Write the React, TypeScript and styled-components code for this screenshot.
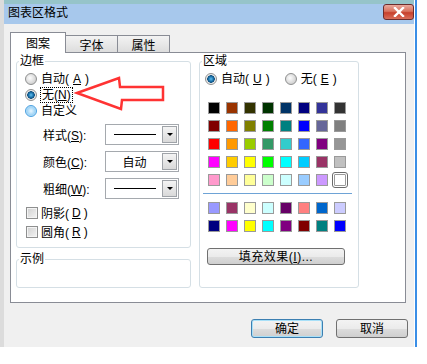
import React from 'react'
import styled, { createGlobalStyle, css } from 'styled-components'

const GlobalStyle = createGlobalStyle`
  body {
    margin: 0;
    background: #fff;
    font-family: "Liberation Sans", "Noto Sans CJK SC", sans-serif;
    font-size: 12px;
    color: #000;
  }
`

const Frame = styled.div`
  position: relative;
  display: flex;
  width: 417px;
  height: 347px;
`

const Side = styled.div`
  width: 4px;
  background: #dcdcdc;
  height: 350px;
`

const Edge = styled.div`
  width: 2px;
  margin-left: 1px;
  background: #3a8ee6;
  height: 350px;
`

const Window = styled.div`
  flex: 1;
  display: flex;
  flex-direction: column;
`

const TitleBar = styled.div`
  height: 24px;
  box-sizing: border-box;
  border-top: 4px solid #96c4c9;
  background: #a7c8ec;
  display: flex;
  align-items: flex-start;
  justify-content: space-between;
  padding-left: 4px;
`

const Title = styled.span`
  line-height: 19px;
  font-size: 12px;
`

const CloseBtn = styled.div`
  width: 31px;
  height: 16px;
  box-sizing: border-box;
  border: 1px solid #6b2d2d;
  border-radius: 3px;
  background: linear-gradient(#e9a99d, #d8735e 45%, #c7402c 55%, #d96e5a);
  display: flex;
  align-items: center;
  justify-content: center;
  margin-right: 0;
`

const Body = styled.div`
  flex: 1;
  background: #f0f0f0;
  padding: 8px 6px 0 6px;
`

const TabRow = styled.div`
  display: flex;
  align-items: flex-end;
  height: 21px;
  margin-bottom: -1px;
  position: relative;
  z-index: 1;
`

const Tab = styled.div<{ $active?: boolean }>`
  box-sizing: border-box;
  border: 1px solid #898c95;
  display: flex;
  align-items: center;
  justify-content: center;
  ${p =>
    p.$active
      ? css`
          width: 56px;
          height: 21px;
          background: #fff;
          border-bottom: none;
          padding-bottom: 1px;
        `
      : css`
          width: 53px;
          height: 18px;
          margin-left: -1px;
          background: linear-gradient(#f3f3f3, #dddddd);
          border-bottom-color: #898c95;
          padding-top: 1px;
          &:nth-child(2) { margin-left: 0; border-left: none; width: 52px; }
        `}
`

const Panel = styled.div`
  width: 396px;
  height: 251px;
  box-sizing: border-box;
  border: 1px solid #898c95;
  background: #fff;
  display: flex;
  gap: 8px;
  padding: 2px 0 0 5px;
`

const Column = styled.div`
  display: flex;
  flex-direction: column;
  gap: 5px;
`

const Group = styled.fieldset<{ $w: number; $h: number }>`
  margin: 0;
  min-width: 0;
  box-sizing: border-box;
  width: ${p => p.$w}px;
  height: ${p => p.$h}px;
  border: 1px solid #d5dfe5;
  border-radius: 3px;
  padding: 0 0 0 3px;
`

const Legend = styled.legend`
  padding: 0 1px;
  margin-left: -1px;
  font-size: 12px;
  line-height: 12px;
`

const RadioList = styled.div`
  display: flex;
  flex-direction: column;
  padding: 4px 0 0 5px;
`

const RadioRow = styled.label`
  display: flex;
  align-items: center;
  gap: 4px;
  height: 16px;
  line-height: 14px;
  white-space: nowrap;
`

const RadioLine = styled.div`
  display: flex;
  align-items: center;
  gap: 15px;
  padding: 4px 0 0 2px;
`

const RadioDot = styled.span<{ $state: 'off' | 'on' | 'hover' }>`
  width: 12px;
  height: 12px;
  box-sizing: border-box;
  border-radius: 50%;
  flex: none;
  border: 1px solid ${p => (p.$state === 'hover' ? '#4aa0e0' : '#8e8f8f')};
  background: ${p =>
    p.$state === 'on'
      ? 'radial-gradient(circle, #5fc0f0 0, #1a6fa8 2.5px, #0d4e7c 3.5px, #e6e6e6 4px, #fafafa 6px)'
      : p.$state === 'hover'
      ? 'radial-gradient(circle, #e8f6ff 0, #9fd4f6 4px, #d6eefc 6px)'
      : 'radial-gradient(circle at 40% 40%, #fdfdfd 0, #d2d2d2 6px)'};
`

const Focus = styled.span`
  outline: 1px dotted #000;
  outline-offset: 0;
  padding: 0 1px;
`

const FieldGrid = styled.div`
  display: grid;
  grid-template-columns: 62px 74px;
  row-gap: 6px;
  align-items: center;
  padding: 5px 0 0 23px;
  white-space: nowrap;
`

const Combo = styled.div`
  width: 74px;
  height: 21px;
  box-sizing: border-box;
  border: 1px solid #a5a9ae;
  background: #fff;
  display: flex;
  align-items: stretch;
  padding: 1px;
`

const ComboValue = styled.div`
  flex: 1;
  display: flex;
  align-items: center;
  justify-content: center;
`

const LineSample = styled.span`
  width: 42px;
  height: 1px;
  background: #000;
`

const DropBtn = styled.div`
  width: 15px;
  box-sizing: border-box;
  border: 1px solid #9fa3a8;
  background: linear-gradient(#f4f4f4, #d9d9d9);
  display: flex;
  align-items: center;
  justify-content: center;
  &::after {
    content: '';
    border-left: 3px solid transparent;
    border-right: 3px solid transparent;
    border-top: 3px solid #000;
  }
`

const CheckList = styled.div`
  display: flex;
  flex-direction: column;
  padding: 4px 0 0 6px;
`

const CheckRow = styled.label`
  display: flex;
  align-items: center;
  gap: 3px;
  height: 19px;
`

const CheckBox = styled.span`
  width: 12px;
  height: 12px;
  box-sizing: border-box;
  border: 1px solid #8e8f8f;
  background: linear-gradient(135deg, #d0d0d0, #f4f4f4);
  box-shadow: inset 0 0 0 1px #f4f4f4;
`

const Palette = styled.div<{ $top: number }>`
  display: grid;
  grid-template-columns: repeat(8, 12px);
  column-gap: 6px;
  row-gap: 6px;
  padding: ${p => p.$top}px 0 0 5px;
`

const Swatch = styled.span<{ $c: string; $selected?: boolean }>`
  width: 12px;
  height: 12px;
  box-sizing: border-box;
  background: ${p => p.$c};
  border: 1px solid #9a9a9a;
  ${p =>
    p.$selected &&
    css`
      outline: 1px solid #6a6a6a;
      outline-offset: 1px;
      border-radius: 1px;
      box-shadow: 0 0 0 1px #fff;
    `}
`

const Divider = styled.div`
  height: 1px;
  background: #6ea3d6;
  margin: 7px 6px 8px 0;
`

const ButtonBase = styled.button`
  font-family: inherit;
  font-size: 12px;
  color: #000;
  box-sizing: border-box;
  border: 1px solid #707070;
  border-radius: 3px;
  background: linear-gradient(#f3f3f3 0, #ebebeb 50%, #dddddd 51%, #cfcfcf 100%);
  padding: 0;
  line-height: 14px;
`

const FillButton = styled(ButtonBase)`
  width: 138px;
  height: 17px;
  margin: 16px 0 0 4px;
  letter-spacing: 0.5px;
`

const Footer = styled.div`
  display: flex;
  justify-content: flex-end;
  gap: 13px;
  margin-top: 16px;
`

const DialogButton = styled(ButtonBase)<{ $default?: boolean }>`
  width: 72px;
  height: 19px;
  ${p =>
    p.$default &&
    css`
      border-color: #3c7fb1;
      box-shadow: inset 0 0 0 1px #a8e0f8;
    `}
`

const Annotation = styled.svg`
  position: absolute;
  left: 0;
  top: 0;
  pointer-events: none;
`

const rows = [
  ['#000000', '#993300', '#333300', '#003300', '#003366', '#000080', '#333399', '#333333'],
  ['#800000', '#FF6600', '#808000', '#008000', '#008080', '#0000FF', '#666699', '#808080'],
  ['#FF0000', '#FF9900', '#99CC00', '#339966', '#33CCCC', '#3366FF', '#800080', '#969696'],
  ['#FF00FF', '#FFCC00', '#FFFF00', '#00FF00', '#00FFFF', '#00CCFF', '#993366', '#C0C0C0'],
  ['#FF99CC', '#FFCC99', '#FFFF99', '#CCFFCC', '#CCFFFF', '#99CCFF', '#CC99FF', '#FFFFFF'],
]

const extra = [
  ['#9999FF', '#993366', '#FFFFCC', '#CCFFFF', '#660066', '#FF8080', '#0066CC', '#CCCCFF'],
  ['#000080', '#FF00FF', '#FFFF00', '#00FFFF', '#800080', '#800000', '#008080', '#0000FF'],
]

export default function App() {
  return (
    <>
      <GlobalStyle />
      <Frame>
        <Side />
        <Window>
          <TitleBar>
            <Title>图表区格式</Title>
            <CloseBtn>
              <svg width="12" height="10" viewBox="0 0 12 10">
                <path d="M2 1 L10 9 M10 1 L2 9" stroke="#fff" strokeWidth="2.4" strokeLinecap="square" />
              </svg>
            </CloseBtn>
          </TitleBar>
          <Body>
            <TabRow>
              <Tab $active>图案</Tab>
              <Tab>字体</Tab>
              <Tab>属性</Tab>
            </TabRow>
            <Panel>
              <Column>
                <Group $w={175} $h={193}>
                  <Legend>边框</Legend>
                  <RadioList>
                    <RadioRow>
                      <RadioDot $state="off" />
                      自动(<u>A</u>)
                    </RadioRow>
                    <RadioRow>
                      <RadioDot $state="on" />
                      <Focus>无(<u>N</u>)</Focus>
                    </RadioRow>
                    <RadioRow>
                      <RadioDot $state="hover" />
                      自定义
                    </RadioRow>
                  </RadioList>
                  <FieldGrid>
                    <span>样式(<u>S</u>):</span>
                    <Combo>
                      <ComboValue><LineSample /></ComboValue>
                      <DropBtn />
                    </Combo>
                    <span>颜色(<u>C</u>):</span>
                    <Combo>
                      <ComboValue>自动</ComboValue>
                      <DropBtn />
                    </Combo>
                    <span>粗细(<u>W</u>):</span>
                    <Combo>
                      <ComboValue><LineSample /></ComboValue>
                      <DropBtn />
                    </Combo>
                  </FieldGrid>
                  <CheckList>
                    <CheckRow>
                      <CheckBox />
                      阴影(<u>D</u>)
                    </CheckRow>
                    <CheckRow>
                      <CheckBox />
                      圆角(<u>R</u>)
                    </CheckRow>
                  </CheckList>
                </Group>
                <Group $w={175} $h={35}>
                  <Legend>示例</Legend>
                </Group>
              </Column>
              <Column>
                <Group $w={160} $h={233}>
                  <Legend>区域</Legend>
                  <RadioLine>
                    <RadioRow>
                      <RadioDot $state="on" />
                      自动(<u>U</u>)
                    </RadioRow>
                    <RadioRow>
                      <RadioDot $state="off" />
                      无(<u>E</u>)
                    </RadioRow>
                  </RadioLine>
                  <Palette $top={15}>
                    {rows.flatMap((r, i) =>
                      r.map((c, j) => (
                        <Swatch key={`${i}-${j}`} $c={c} $selected={i === 4 && j === 7} />
                      ))
                    )}
                  </Palette>
                  <Divider />
                  <Palette $top={0}>
                    {extra.flatMap((r, i) => r.map((c, j) => <Swatch key={`x${i}-${j}`} $c={c} />))}
                  </Palette>
                  <FillButton>填充效果(<u>I</u>)...</FillButton>
                </Group>
              </Column>
            </Panel>
            <Footer>
              <DialogButton $default>确定</DialogButton>
              <DialogButton>取消</DialogButton>
            </Footer>
          </Body>
        </Window>
        <Edge />
        <Annotation width="427" height="364" viewBox="0 0 427 364">
          <polygon
            points="77,93 119,78 120,87 163,87 163,100 122,100 121,109"
            fill="none"
            stroke="#ff3333"
            strokeWidth="2.5"
            strokeLinejoin="miter"
          />
        </Annotation>
      </Frame>
    </>
  )
}
